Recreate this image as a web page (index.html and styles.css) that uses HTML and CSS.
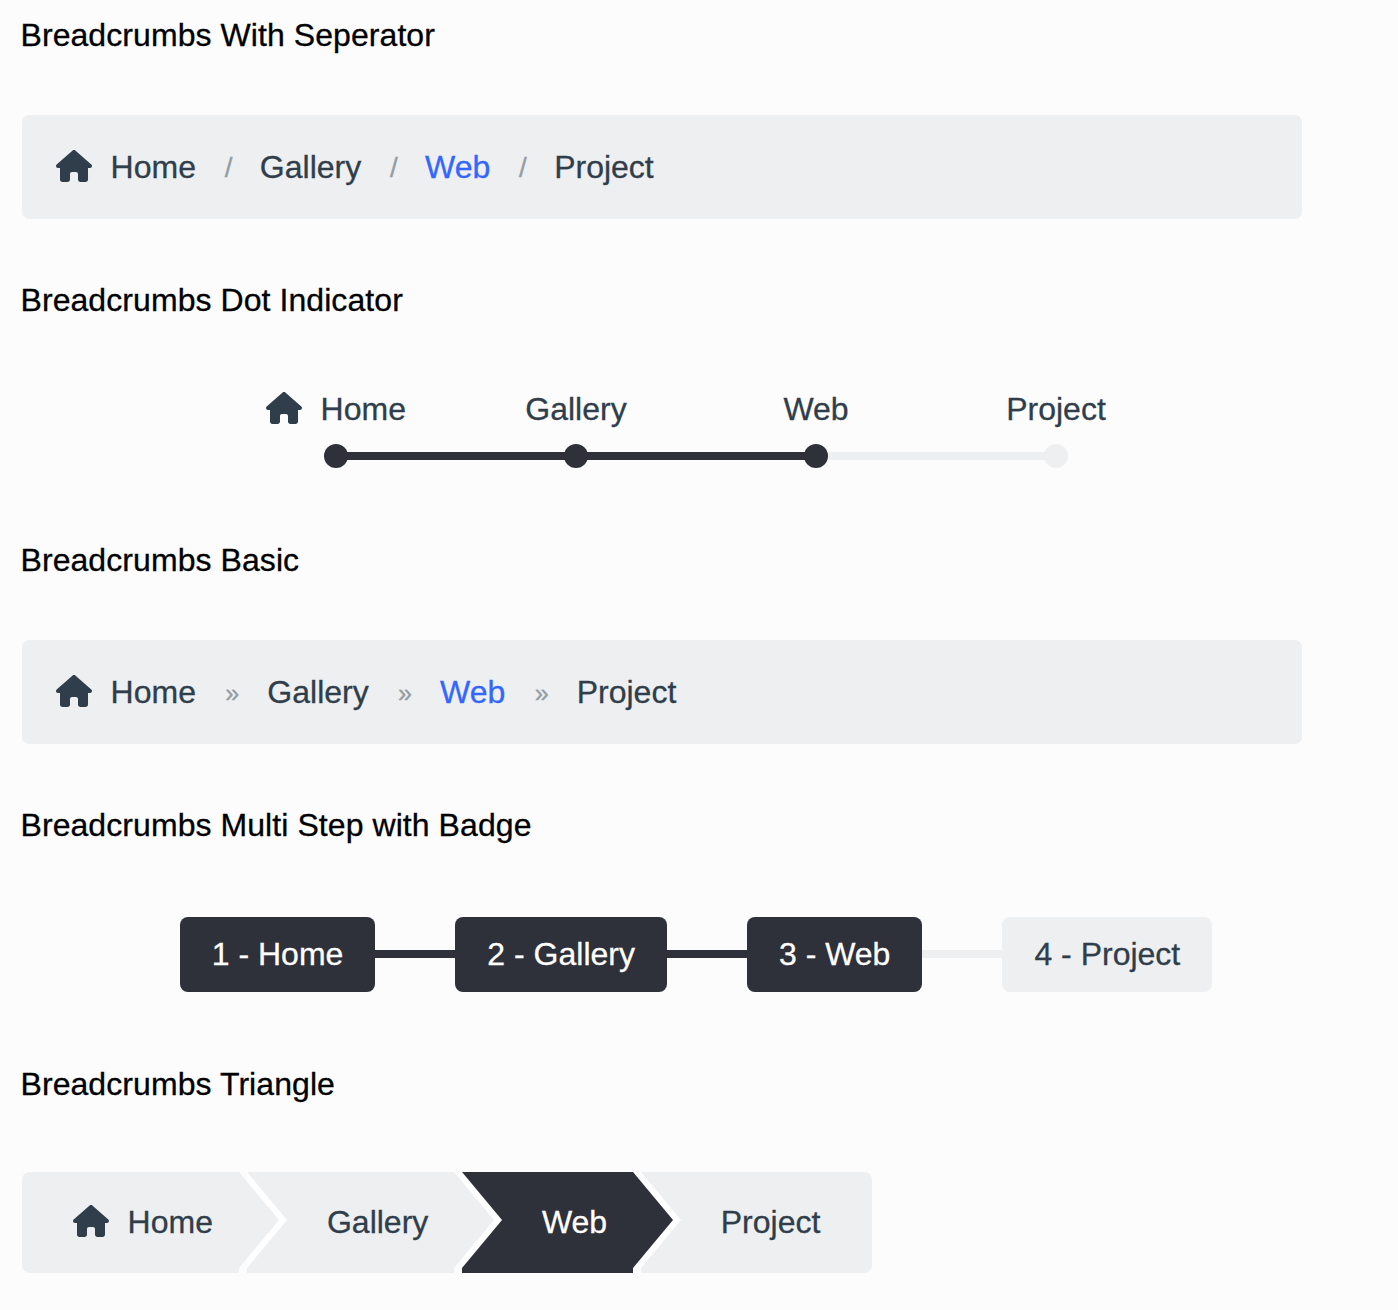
FILE: index.html
```html
<!DOCTYPE html>
<html lang="en">
<head>
<meta charset="utf-8">
<title>Breadcrumbs</title>
<link rel="stylesheet" href="styles.css">
</head>
<body>
<svg class="sprite" aria-hidden="true">
  <symbol id="house" viewBox="0 0 576 512"><path d="M575.8 255.5c0 18-15 32.1-32 32.1h-32l.7 160.2c0 2.7-.2 5.4-.5 8.1V472c0 22.1-17.9 40-40 40H456c-1.1 0-2.2 0-3.3-.1c-1.4 .1-2.8 .1-4.2 .1H416 392c-22.1 0-40-17.9-40-40V448 384c0-17.7-14.3-32-32-32H256c-17.7 0-32 14.3-32 32v64 24c0 22.1-17.9 40-40 40H160 128.1c-1.5 0-3-.1-4.5-.2c-1.2 .1-2.4 .2-3.6 .2H104c-22.1 0-40-17.9-40-40V360c0-.9 0-1.9 .1-2.8V287.6H32c-18 0-32-14-32-32.1c0-9 3-17 10-24L266.4 8c7-7 15-8 22-8s15 2 21 7L564.8 231.5c8 7 12 15 11 24z"/></symbol>
</svg>
<main class="page">
  <section class="demo">
    <h2 class="title">Breadcrumbs With Seperator</h2>
    <ol class="crumbs crumbs-bar">
      <li><svg class="icon"><use href="#house"/></svg>Home</li>
      <li class="sep">/</li>
      <li>Gallery</li>
      <li class="sep">/</li>
      <li class="active">Web</li>
      <li class="sep">/</li>
      <li>Project</li>
    </ol>
  </section>
  <section class="demo demo-dots">
    <h2 class="title">Breadcrumbs Dot Indicator</h2>
    <ol class="crumbs crumbs-dots">
      <li class="done"><span><svg class="icon"><use href="#house"/></svg>Home</span></li>
      <li class="done"><span>Gallery</span></li>
      <li class="current"><span>Web</span></li>
      <li><span>Project</span></li>
    </ol>
  </section>
  <section class="demo">
    <h2 class="title">Breadcrumbs Basic</h2>
    <ol class="crumbs crumbs-bar">
      <li><svg class="icon"><use href="#house"/></svg>Home</li>
      <li class="sep sep-angle">»</li>
      <li>Gallery</li>
      <li class="sep sep-angle">»</li>
      <li class="active">Web</li>
      <li class="sep sep-angle">»</li>
      <li>Project</li>
    </ol>
  </section>
  <section class="demo demo-steps">
    <h2 class="title">Breadcrumbs Multi Step with Badge</h2>
    <ol class="crumbs crumbs-steps">
      <li class="badge dark">1 - Home</li>
      <li class="link dark"></li>
      <li class="badge dark">2 - Gallery</li>
      <li class="link dark"></li>
      <li class="badge dark">3 - Web</li>
      <li class="link"></li>
      <li class="badge">4 - Project</li>
    </ol>
  </section>
  <section class="demo demo-triangle">
    <h2 class="title">Breadcrumbs Triangle</h2>
    <ol class="crumbs crumbs-triangle">
      <li><svg class="icon"><use href="#house"/></svg>Home</li>
      <li>Gallery</li>
      <li class="dark">Web</li>
      <li>Project</li>
    </ol>
  </section>
</main>
</body>
</html>
```
FILE: styles.css
```css
:root {
  --ink: #303e4b;
  --dark: #2e303a;
  --light: #edeff0;
  --muted: #959da2;
}

* {
  box-sizing: border-box;
}

body {
  margin: 0;
  background: #fcfcfc;
  color: #000;
  font: 32px/36px "Liberation Sans", Arial, sans-serif;
}

.sprite {
  display: none;
}

.page {
  padding: 17px 28px 0 22px;
}

.title {
  margin: 0 0 62px -1.5px;
  font-size: 32px;
  font-weight: 400;
  letter-spacing: 0.07px;
  -webkit-text-stroke: 0.3px currentColor;
}

.demo {
  margin-bottom: 63px;
}

.demo-dots .title {
  margin-bottom: 73px;
}

.demo-steps .title {
  margin-bottom: 74px;
}

.demo-dots,
.demo-steps {
  margin-bottom: 74px;
}

.demo-triangle {
  margin-bottom: 0;
}

.demo-triangle .title {
  margin-bottom: 70px;
}

.crumbs {
  display: flex;
  margin: 0;
  padding: 0;
  list-style: none;
  color: var(--ink);
  white-space: nowrap;
  -webkit-text-stroke: 0.3px currentColor;
}

.icon {
  flex: none;
  width: 36px;
  height: 32px;
  margin: 1px 18.6px 0 0;
  fill: currentColor;
  stroke: none;
}

/* Bar with text separators */
.crumbs-bar {
  width: 1280px;
  padding: 34px;
  border-radius: 7px;
  background: var(--light);
}

.crumbs-bar li {
  display: flex;
}

.crumbs-bar .active {
  color: #3366ff;
}

.crumbs-bar .sep {
  padding: 1px 27.3px 0 28.8px;
  color: var(--muted);
  font-size: 28px;
  line-height: 35px;
}

.crumbs-bar .sep-angle {
  padding: 2px 28.1px 0 29.4px;
  font-size: 25px;
  line-height: 34px;
}

/* Dots joined by a line */
.crumbs-dots {
  display: grid;
  grid-template-columns: repeat(4, 240px);
  justify-content: center;
}

.crumbs-dots li {
  position: relative;
  display: flex;
  flex-direction: column;
  align-items: center;
  gap: 17px;
}

.crumbs-dots span {
  display: flex;
}

.crumbs-dots li::after {
  content: "";
  z-index: 1;
  width: 24px;
  height: 24px;
  border-radius: 50%;
  background: var(--light);
}

.crumbs-dots .done::after,
.crumbs-dots .current::after {
  background: var(--dark);
}

.crumbs-dots li:not(:last-child)::before {
  content: "";
  position: absolute;
  bottom: 8px;
  left: 50%;
  width: 100%;
  height: 8px;
  background: var(--light);
}

.crumbs-dots .done:not(:last-child)::before {
  background: var(--dark);
}

/* Badges */
.crumbs-steps {
  align-items: center;
  justify-content: center;
}

.badge {
  padding: 19px 32px 20px;
  border-radius: 8px;
  background: var(--light);
}

.link {
  width: 80px;
  height: 8px;
  margin-bottom: 1px;
  background: var(--light);
}

.dark {
  background: var(--dark);
  color: #fff;
}

/* Arrow-shaped segments */
.crumbs-triangle {
  gap: 8px;
}

.crumbs-triangle li {
  position: relative;
  display: flex;
  padding: 32px 25.6px 33px 80px;
  background: var(--light);
}

.crumbs-triangle .dark {
  background: var(--dark);
}

.crumbs-triangle li:first-child {
  padding-right: 26px;
  padding-left: 51px;
  border-radius: 8px 0 0 8px;
}

.crumbs-triangle li:last-child {
  padding-right: 51.6px;
  padding-left: 80px;
  border-radius: 0 8px 8px 0;
}

.crumbs-triangle li:not(:last-child)::before,
.crumbs-triangle li:not(:last-child)::after {
  content: "";
  position: absolute;
  z-index: 1;
  top: 0;
  left: 100%;
  border: 48px solid transparent;
  border-right-width: 0;
  border-left: 40px solid var(--light);
}

.crumbs-triangle li:not(:last-child)::before {
  margin-left: 8px;
  border-left-color: #fff;
}

.crumbs-triangle .dark:not(:last-child)::after {
  border-left-color: var(--dark);
}
```
